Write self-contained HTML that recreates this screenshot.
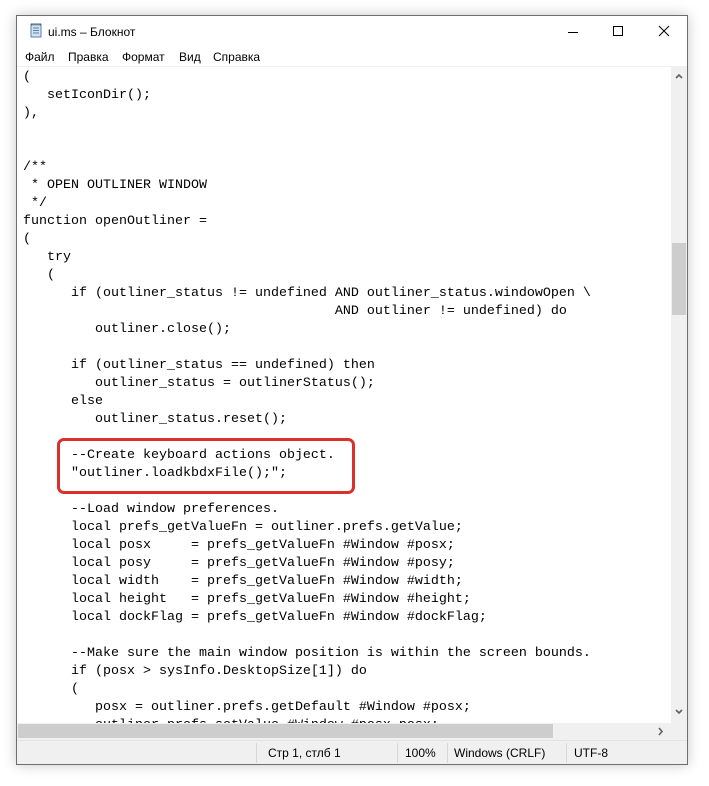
<!DOCTYPE html>
<html><head><meta charset="utf-8"><style>
*{margin:0;padding:0;box-sizing:border-box}
body{width:709px;height:786px;background:#fff;position:relative;overflow:hidden;font-family:"Liberation Sans",sans-serif}
.win{position:absolute;left:16px;top:15px;width:672px;height:750px;border:1px solid #6e6e6e;background:#fff;box-shadow:0 0 12px rgba(0,0,0,.22)}
.abs{position:absolute}
.title{left:31px;top:9px;font-size:12px;color:#000}
.menu{top:34px;font-size:12px;color:#000}
.text{position:absolute;left:6px;top:52px;width:648px;height:655px;overflow:hidden;font-family:"Liberation Mono",monospace;font-size:13.33px;line-height:18px;white-space:pre;color:#000;padding-top:1px}
.vs{left:654px;top:51px;width:16px;height:656px;background:#f0f0f0}
.hs{left:0;top:707px;width:654px;height:17px;background:#f0f0f0}
.corner{left:654px;top:707px;width:16px;height:17px;background:#f0f0f0}
.status{left:0;top:724px;width:670px;height:24px;background:#f0f0f0;border-top:1px solid #e3e3e3;font-size:12px}
.sep{position:absolute;top:2px;width:1px;height:20px;background:#d7d7d7}
.st{position:absolute;top:5px}
.red{position:absolute;left:40px;top:422px;width:298px;height:56px;border:3px solid #d9302c;border-radius:7px}
</style></head><body>
<div class="win">
  <svg class="abs" style="left:12px;top:6px" width="14" height="16" viewBox="0 0 14 16">
    <rect x="2" y="2" width="10" height="13" fill="#cfe3f4" stroke="#5a7fa8" stroke-width="1"/>
    <path d="M4 6h6M4 8.5h6M4 11h6" stroke="#5a7fa8" stroke-width="1"/>
    <path d="M3 1.5v2M5 1.5v2M7 1.5v2M9 1.5v2M11 1.5v2" stroke="#333" stroke-width=".8"/>
  </svg>
  <div class="abs title">ui.ms – Блокнот</div>
  <svg class="abs" style="left:550px;top:9px" width="110" height="14">
    <path d="M1 7.5h10" stroke="#000" stroke-width="1"/>
    <rect x="46.5" y="1.5" width="9" height="9" fill="none" stroke="#000"/>
    <path d="M92 1l10 10M102 1l-10 10" stroke="#000" stroke-width="1"/>
  </svg>
  <div class="abs menu" style="left:8px">Файл</div>
  <div class="abs menu" style="left:51px">Правка</div>
  <div class="abs menu" style="left:105px">Формат</div>
  <div class="abs menu" style="left:162px">Вид</div>
  <div class="abs menu" style="left:196px">Справка</div>
  <div class="abs" style="left:0;top:50px;width:670px;height:1px;background:#f0f0f0"></div>
<div class="text">(
   setIconDir();
),


/**
 * OPEN OUTLINER WINDOW
 */
function openOutliner =
(
   try
   (
      if (outliner_status != undefined AND outliner_status.windowOpen \
                                       AND outliner != undefined) do
         outliner.close();

      if (outliner_status == undefined) then
         outliner_status = outlinerStatus();
      else
         outliner_status.reset();

      --Create keyboard actions object.
      "outliner.loadkbdxFile();";

      --Load window preferences.
      local prefs_getValueFn = outliner.prefs.getValue;
      local posx     = prefs_getValueFn #Window #posx;
      local posy     = prefs_getValueFn #Window #posy;
      local width    = prefs_getValueFn #Window #width;
      local height   = prefs_getValueFn #Window #height;
      local dockFlag = prefs_getValueFn #Window #dockFlag;

      --Make sure the main window position is within the screen bounds.
      if (posx &gt; sysInfo.DesktopSize[1]) do
      (
         posx = outliner.prefs.getDefault #Window #posx;
         outliner.prefs.setValue #Window #posx posx;
</div>
  <div class="red"></div>
  <div class="abs vs">
    <svg class="abs" style="left:4px;top:6px" width="8" height="6"><path d="M1 5l3-3 3 3" stroke="#606060" stroke-width="1.6" fill="none"/></svg>
    <div class="abs" style="left:1px;top:176px;width:14px;height:72px;background:#cdcdcd"></div>
    <svg class="abs" style="left:4px;top:642px" width="8" height="6"><path d="M1 1l3 3 3-3" stroke="#606060" stroke-width="1.6" fill="none"/></svg>
  </div>
  <div class="abs hs">
    <div class="abs" style="left:1px;top:1px;width:535px;height:14px;background:#cdcdcd"></div>
    <svg class="abs" style="left:641px;top:4px" width="6" height="9"><path d="M1 1l3 3.5-3 3.5" stroke="#606060" stroke-width="1.6" fill="none"/></svg>
  </div>
  <div class="abs corner"></div>
  <div class="abs status">
    <div class="sep" style="left:239px"></div>
    <div class="sep" style="left:380px"></div>
    <div class="sep" style="left:430px"></div>
    <div class="sep" style="left:549px"></div>
    <div class="st" style="left:251px">Стр 1, стлб 1</div>
    <div class="st" style="left:388px">100%</div>
    <div class="st" style="left:437px">Windows (CRLF)</div>
    <div class="st" style="left:557px">UTF-8</div>
  </div>
</div>
</body></html>
